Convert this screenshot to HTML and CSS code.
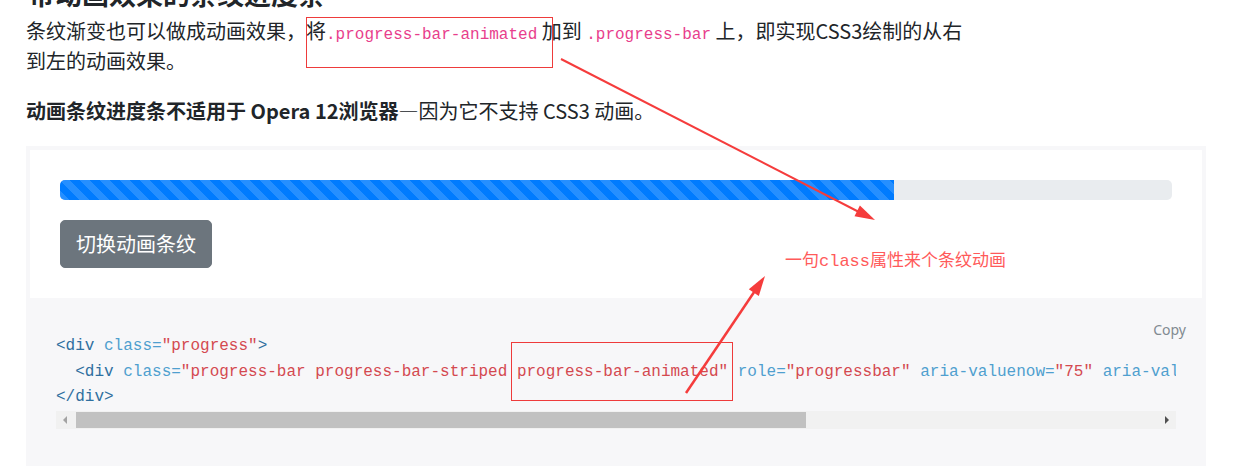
FILE: index.html
```html
<!DOCTYPE html>
<html lang="zh-CN">
<head>
<meta charset="utf-8">
<title>动画条纹进度条</title>
<link rel="stylesheet" href="styles.css">
</head>
<body>
<div class="page">
  <h2 class="title">带动画效果的条纹进度条</h2>
  <p class="lead">条纹渐变也可以做成动画效果，将<code>.progress-bar-animated</code> 加到 <code>.progress-bar</code> 上，即实现CSS3绘制的从右<br>到左的动画效果。</p>
  <p class="note"><strong>动画条纹进度条不适用于 Opera 12浏览器</strong>—因为它不支持 CSS3 动画。</p>

  <div class="example">
    <div class="progress"><div class="progress-bar" style="width: 75%"></div></div>
    <button class="btn">切换动画条纹</button>
  </div>
  <div class="highlight">
    <span class="copy">Copy</span>
    <div class="code-scroll">
<pre><span class="nt">&lt;div</span> <span class="na">class=</span><span class="s">"progress"</span><span class="nt">&gt;</span>
  <span class="nt">&lt;div</span> <span class="na">class=</span><span class="s">"progress-bar progress-bar-striped progress-bar-animated"</span> <span class="na">role=</span><span class="s">"progressbar"</span> <span class="na">aria-valuenow=</span><span class="s">"75"</span> <span class="na">aria-valuemin=</span><span class="s">"0"</span> <span class="na">aria-valuemax=</span><span class="s">"100"</span> <span class="na">style=</span><span class="s">"width: 75%"</span><span class="nt">&gt;&lt;/div&gt;</span>
<span class="nt">&lt;/div&gt;</span></pre>
    </div>
    <div class="hscroll">
      <span class="arrow-btn"><span class="tri-left"></span></span>
      <span class="thumb"></span>
      <span class="track-rest"></span>
      <span class="arrow-btn"><span class="tri-right"></span></span>
    </div>
  </div>

  <svg class="annot" width="1253" height="466" viewBox="0 0 1253 466" xmlns="http://www.w3.org/2000/svg">
    <rect x="306.5" y="17.5" width="246" height="50" fill="none" stroke="#ee3b3b" stroke-width="1"/>
    <rect x="511.5" y="342.5" width="221" height="58" fill="none" stroke="#ee3b3b" stroke-width="1"/>
    <line x1="561" y1="59" x2="858" y2="211.5" stroke="#f53c3c" stroke-width="2"/>
    <polygon points="875,220 854.5,216.2 859.9,205.6" fill="#f53c3c"/>
    <line x1="686" y1="393" x2="754.5" y2="291.5" stroke="#f53c3c" stroke-width="2.5"/>
    <polygon points="765,276 758.8,296.0 748.8,289.2" fill="#f53c3c"/>
  </svg>
  <span class="annot-text">一句class属性来个条纹动画</span>
</div>
</body>
</html>
```
FILE: styles.css
```css
html, body {
  margin: 0;
  padding: 0;
  background: #fff;
}
body {
  font-family: "Noto Sans CJK SC", "Noto Sans", sans-serif;
  color: #212529;
  font-size: 20px;
  overflow: hidden;
}
.page {
  position: relative;
  display: flow-root;
  width: 1180px;
  padding-left: 26px;
  height: 466px;
}
.title {
  margin: -22px 0 0 2px;
  font-size: 27px;
  line-height: 32px;
  font-weight: 700;
  color: #212529;
}
.lead {
  margin: 6px 0 0 0;
  line-height: 30px;
  font-size: 20px;
}
.lead code {
  font-family: "Liberation Mono", monospace;
  font-size: 16px;
  line-height: 1;
  color: #e83e8c;
}
.note {
  margin: 20px 0 0 0;
  line-height: 29px;
  font-size: 20px;
}
.note strong {
  font-weight: 700;
}
.example {
  margin-top: 21px;
  border: 4px solid #f7f7f9;
  padding: 30px;
  background: #fff;
}
.progress {
  height: 20px;
  background: #e9ecef;
  border-radius: 5px;
  overflow: hidden;
  display: flex;
}
.progress-bar {
  height: 100%;
  background-color: #007bff;
  background-image: linear-gradient(45deg, rgba(255,255,255,.15) 25%, transparent 25%, transparent 50%, rgba(255,255,255,.15) 50%, rgba(255,255,255,.15) 75%, transparent 75%, transparent);
  background-size: 20px 20px;
}
.btn {
  margin-top: 20px;
  display: block;
  font-family: "Noto Sans CJK SC", sans-serif;
  font-size: 20px;
  line-height: 30px;
  padding: 8px 15px;
  color: #fff;
  background: #6c757d;
  border: 1px solid #6c757d;
  border-radius: 5px;
}
.highlight {
  position: relative;
  background: #f7f7f9;
  padding: 32px 30px 40px 30px;
}
.copy {
  position: absolute;
  top: 12px;
  right: 10px;
  padding: 5px 10px;
  font-family: "Noto Sans", sans-serif;
  font-size: 14px;
  line-height: 22px;
  color: #818a91;
}
.code-scroll {
  overflow: hidden;
}
pre {
  margin: 0;
  font-family: "Liberation Mono", monospace;
  font-size: 16px;
  line-height: 25.5px;
  color: #212529;
  white-space: pre;
}
.nt { color: #2f6f9f; }
.na { color: #4f9fcf; }
.s { color: #d44950; }
.hscroll {
  margin-top: 0;
  height: 18px;
  display: flex;
  background: #f1f1f1;
}
.arrow-btn {
  width: 18px;
  height: 18px;
  display: flex;
  align-items: center;
  justify-content: center;
}
.tri-left {
  width: 0;
  height: 0;
  border-top: 4px solid transparent;
  border-bottom: 4px solid transparent;
  border-right: 4px solid #a3a3a3;
}
.tri-right {
  width: 0;
  height: 0;
  border-top: 4px solid transparent;
  border-bottom: 4px solid transparent;
  border-left: 4px solid #505050;
}
.thumb {
  margin: 1px 0 1px 2px;
  width: 730px;
  background: #c1c1c1;
}
.track-rest {
  flex: 1;
}
.annot {
  position: absolute;
  top: 0;
  left: 0;
  pointer-events: none;
}
.annot-text {
  position: absolute;
  left: 785px;
  top: 250px;
  font-family: "Liberation Mono", "Noto Sans CJK SC", monospace;
  font-size: 17px;
  line-height: 24px;
  color: #ff5a5a;
  white-space: nowrap;
}
```
